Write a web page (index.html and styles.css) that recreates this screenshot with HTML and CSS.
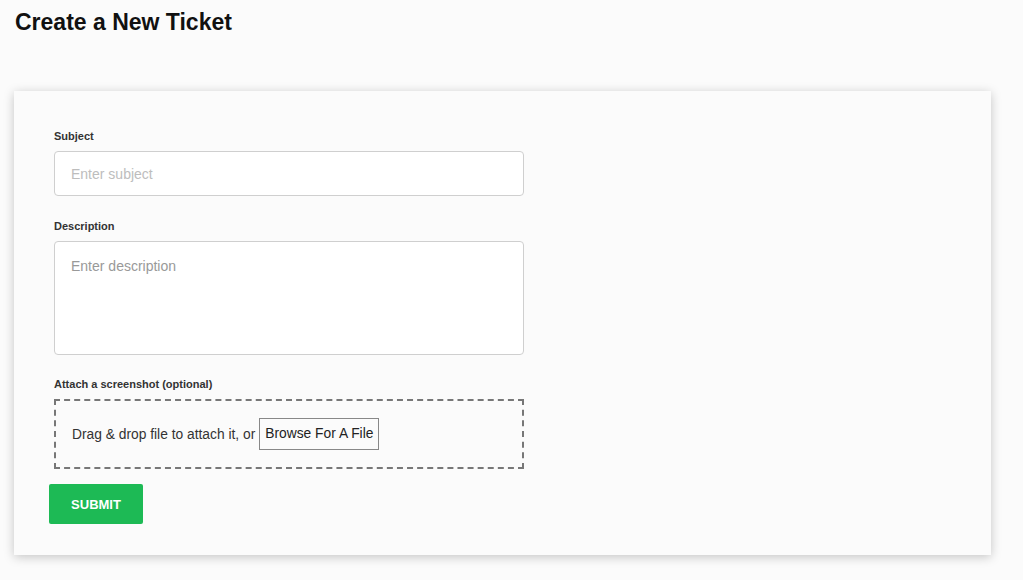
FILE: index.html
```html
<!DOCTYPE html>
<html>
<head>
<meta charset="utf-8">
<link rel="stylesheet" href="styles.css">
</head>
<body>
<h1 class="title">Create a New Ticket</h1>
<div class="card">
  <form class="form">
    <div class="field">
      <label class="label">Subject</label>
      <input class="input" type="text" placeholder="Enter subject">
    </div>
    <div class="field">
      <label class="label">Description</label>
      <textarea class="textarea" placeholder="Enter description"></textarea>
    </div>
    <div class="field field-attach">
      <label class="label">Attach a screenshot (optional)</label>
      <div class="dropzone">
        <span class="drop-text">Drag &amp; drop file to attach it, or</span>
        <span class="browse">Browse For A File</span>
      </div>
    </div>
    <button class="submit" type="button">SUBMIT</button>
  </form>
</div>
</body>
</html>
```

FILE: styles.css
```css
* { box-sizing: border-box; }
html, body { margin: 0; padding: 0; }
body {
  background: #fbfbfb;
  font-family: "Liberation Sans", Arial, sans-serif;
  color: #222;
  padding: 9px 14px 0 14px;
  width: 1023px;
  height: 580px;
  overflow: hidden;
}
.title {
  margin: 0 0 0 1px;
  font-size: 23px;
  font-weight: 700;
  color: #111;
  line-height: 26px;
}
.card {
  margin-top: 56px;
  width: 977px;
  height: 464px;
  background: #fbfbfb;
  box-shadow: 0 2px 10px rgba(0,0,0,0.22);
  padding: 38px 40px 0 40px;
}
.form {
  width: 470px;
  display: flex;
  flex-direction: column;
}
.field {
  display: flex;
  flex-direction: column;
  margin-bottom: 23px;
}
.field-attach { margin-top: -1px; }
.label {
  font-size: 11px;
  font-weight: 700;
  color: #333;
  line-height: 14px;
  margin-bottom: 8px;
}
.input, .textarea {
  font-family: inherit;
  width: 470px;
  border: 1px solid #cfcfcf;
  border-radius: 4px;
  background: #fff;
  font-size: 14px;
  color: #333;
  padding: 0 16px;
  outline: none;
}
.input { height: 45px; }
.input::placeholder { color: #bdbdbd; }
.textarea {
  height: 114px;
  padding-top: 16px;
  resize: none;
}
.textarea::placeholder { color: #999; }
.dropzone {
  width: 470px;
  height: 70px;
  border: 2px dashed #777;
  display: flex;
  align-items: center;
  padding-left: 16px;
  font-size: 13.8px;
  color: #333;
}
.drop-text { margin-right: 4px; }
.browse {
  border: 1px solid #888;
  padding: 7px 5px;
  line-height: 16px;
  color: #222;
}
.submit {
  align-self: flex-start;
  margin-left: -5px;
  margin-top: -8px;
  width: 94px;
  height: 40px;
  background: #1dba55;
  color: #fff;
  border: none;
  border-radius: 2px;
  font-family: inherit;
  font-size: 13px;
  font-weight: 700;
}
```
